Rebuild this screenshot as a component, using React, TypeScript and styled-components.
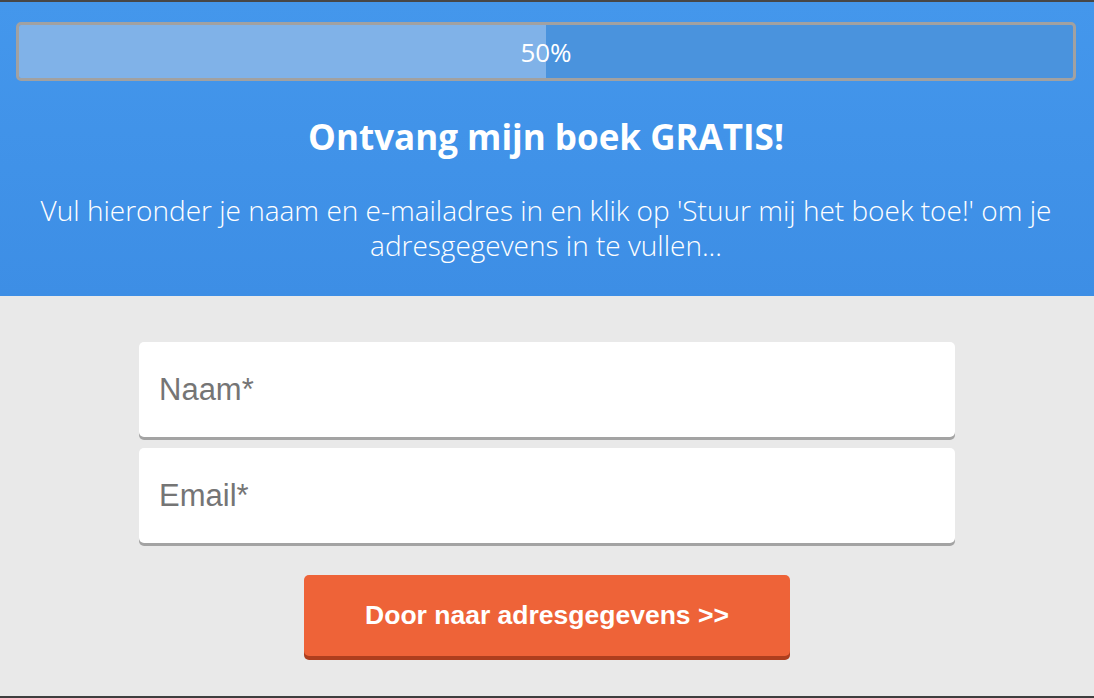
import React from "react";
import styled, { createGlobalStyle } from "styled-components";

const GlobalStyle = createGlobalStyle`
  html, body {
    margin: 0;
    padding: 0;
    background: #e9e9e9;
  }
  * {
    box-sizing: border-box;
  }
`;

const Page = styled.div`
  width: 1094px;
  height: 698px;
  display: flex;
  flex-direction: column;
  border-top: 2px solid #474747;
  border-bottom: 2px solid #3f3f3f;
  background: #e9e9e9;
`;

const Header = styled.div`
  flex: none;
  padding: 20px 18px 33px 16px;
  background: linear-gradient(to bottom, #4497ec, #3d8ee5);
  display: flex;
  flex-direction: column;
  align-items: stretch;
`;

const ProgressTrack = styled.div`
  position: relative;
  height: 59px;
  border: 3px solid #a1a1a1;
  border-radius: 5px;
  background: #4a93dd;
  overflow: hidden;
  display: flex;
  align-items: center;
  justify-content: center;
`;

const ProgressFill = styled.div`
  position: absolute;
  left: 0;
  top: 0;
  bottom: 0;
  background: #80b2e8;
`;

const ProgressLabel = styled.span`
  position: relative;
  font-family: "Open Sans", "DejaVu Sans", sans-serif;
  font-size: 26px;
  color: #ffffff;
  line-height: 1;
`;

const Title = styled.h1`
  margin: 33px 0 0;
  font-family: "Open Sans", "DejaVu Sans", sans-serif;
  font-weight: 700;
  font-size: 35px;
  line-height: 46px;
  color: #ffffff;
  text-align: center;
`;

const Intro = styled.p`
  margin: 33px 0 0;
  padding: 0 8px;
  font-family: "Open Sans", "DejaVu Sans", sans-serif;
  font-weight: 300;
  font-size: 28px;
  line-height: 35px;
  color: #ffffff;
  text-align: center;
`;

const Form = styled.form`
  flex: 1;
  display: flex;
  flex-direction: column;
  align-items: center;
  padding-top: 46px;
`;

const Field = styled.input`
  width: 816px;
  height: 95px;
  margin-bottom: 11px;
  border: none;
  border-radius: 5px;
  box-shadow: 0 3px 0 #a3a3a3;
  background: #ffffff;
  padding: 0 20px;
  font-family: "Liberation Sans", Arial, sans-serif;
  font-size: 31px;
  color: #333;
  outline: none;

  &::placeholder {
    color: #757575;
  }
`;

const SubmitButton = styled.button`
  margin-top: 21px;
  width: 486px;
  height: 81px;
  border: none;
  border-radius: 5px;
  background: #ee6338;
  box-shadow: 0 4px 0 #ad3e1e;
  color: #ffffff;
  font-family: "Liberation Sans", Arial, sans-serif;
  font-weight: 700;
  font-size: 26.5px;
  cursor: pointer;
`;

const App: React.FC = () => {
  const progress = 50;

  return (
    <Page>
      <GlobalStyle />
      <Header>
        <ProgressTrack>
          <ProgressFill style={{ width: `${progress}%` }} />
          <ProgressLabel>{progress}%</ProgressLabel>
        </ProgressTrack>
        <Title>Ontvang mijn boek GRATIS!</Title>
        <Intro>
          Vul hieronder je naam en e-mailadres in en klik op 'Stuur mij het boek
          toe!' om je adresgegevens in te vullen...
        </Intro>
      </Header>
      <Form onSubmit={(e) => e.preventDefault()}>
        <Field type="text" placeholder="Naam*" />
        <Field type="email" placeholder="Email*" />
        <SubmitButton type="submit">Door naar adresgegevens &gt;&gt;</SubmitButton>
      </Form>
    </Page>
  );
};

export default App;
